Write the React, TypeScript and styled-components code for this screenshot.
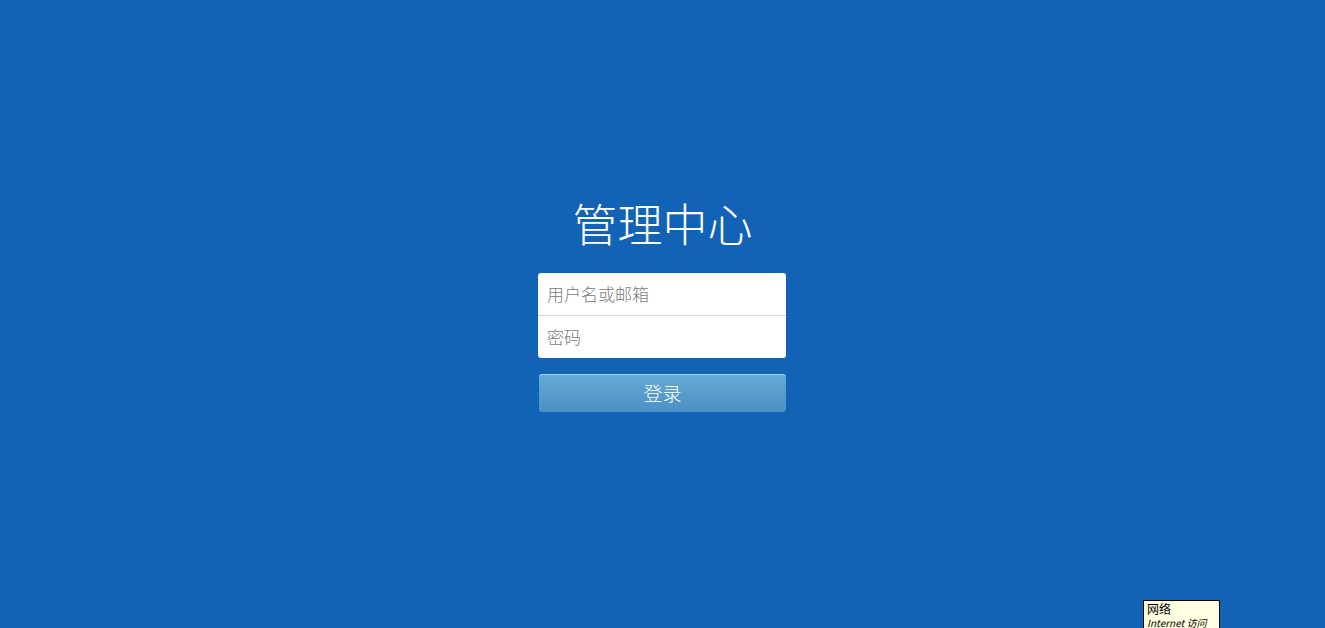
import React from 'react';
import styled, { createGlobalStyle } from 'styled-components';

const GlobalStyle = createGlobalStyle`
  html, body {
    margin: 0;
    padding: 0;
    height: 100%;
    background-color: #1262b6;
    font-family: "Noto Sans CJK SC", "Liberation Sans", sans-serif;
    overflow: hidden;
  }
  #root {
    height: 100%;
  }
  *, *::before, *::after {
    box-sizing: border-box;
  }
`;

const Page = styled.div`
  position: relative;
  height: 100vh;
  display: flex;
  flex-direction: column;
  align-items: center;
  padding-top: 192px;
`;

const Title = styled.h1`
  margin: 0 0 19px 0;
  font-size: 45px;
  font-weight: 300;
  line-height: 62px;
  color: #ffffff;
`;

const Form = styled.form`
  width: 248px;
  display: flex;
  flex-direction: column;
  margin-left: -1px;
`;

const FieldGroup = styled.div`
  display: flex;
  flex-direction: column;
  background: #ffffff;
  border-radius: 3px;
  overflow: hidden;
  margin-bottom: 16px;
`;

const Field = styled.input<{ $last?: boolean }>`
  height: ${p => (p.$last ? '42px' : '43px')};
  border: none;
  border-bottom: ${p => (p.$last ? 'none' : '1px solid #d4d4d4')};
  padding: 0 9px 2px 9px;
  font-family: inherit;
  font-size: 17px;
  font-weight: 300;
  color: #333;
  outline: none;
  background: transparent;

  &::placeholder {
    color: #7a7a7a;
  }
`;

const SubmitButton = styled.button`
  height: 38px;
  margin-left: 1px;
  border: none;
  border-top: 1px solid #a9d1ea;
  border-radius: 3px;
  background: linear-gradient(to bottom, #66abd6, #4a90c2);
  color: #ffffff;
  font-family: inherit;
  font-size: 19px;
  font-weight: 300;
  padding: 0 0 2px 0;
  cursor: pointer;
`;

const Tooltip = styled.div`
  position: absolute;
  left: 1143px;
  top: 600px;
  width: 77px;
  height: 30px;
  padding: 1px 3px;
  background: #ffffe1;
  border: 1px solid #000;
  color: #000;
`;

const TooltipTitle = styled.div`
  font-size: 12px;
  line-height: 14px;
`;

const TooltipSub = styled.div`
  font-style: italic;
  font-size: 10px;
  line-height: 13px;
  white-space: nowrap;
`;

export default function App() {
  return (
    <>
      <GlobalStyle />
      <Page>
        <Title>管理中心</Title>
        <Form onSubmit={e => e.preventDefault()}>
          <FieldGroup>
            <Field type="text" placeholder="用户名或邮箱" />
            <Field type="password" placeholder="密码" $last />
          </FieldGroup>
          <SubmitButton type="submit">登录</SubmitButton>
        </Form>
        <Tooltip>
          <TooltipTitle>网络</TooltipTitle>
          <TooltipSub>Internet 访问</TooltipSub>
        </Tooltip>
      </Page>
    </>
  );
}
